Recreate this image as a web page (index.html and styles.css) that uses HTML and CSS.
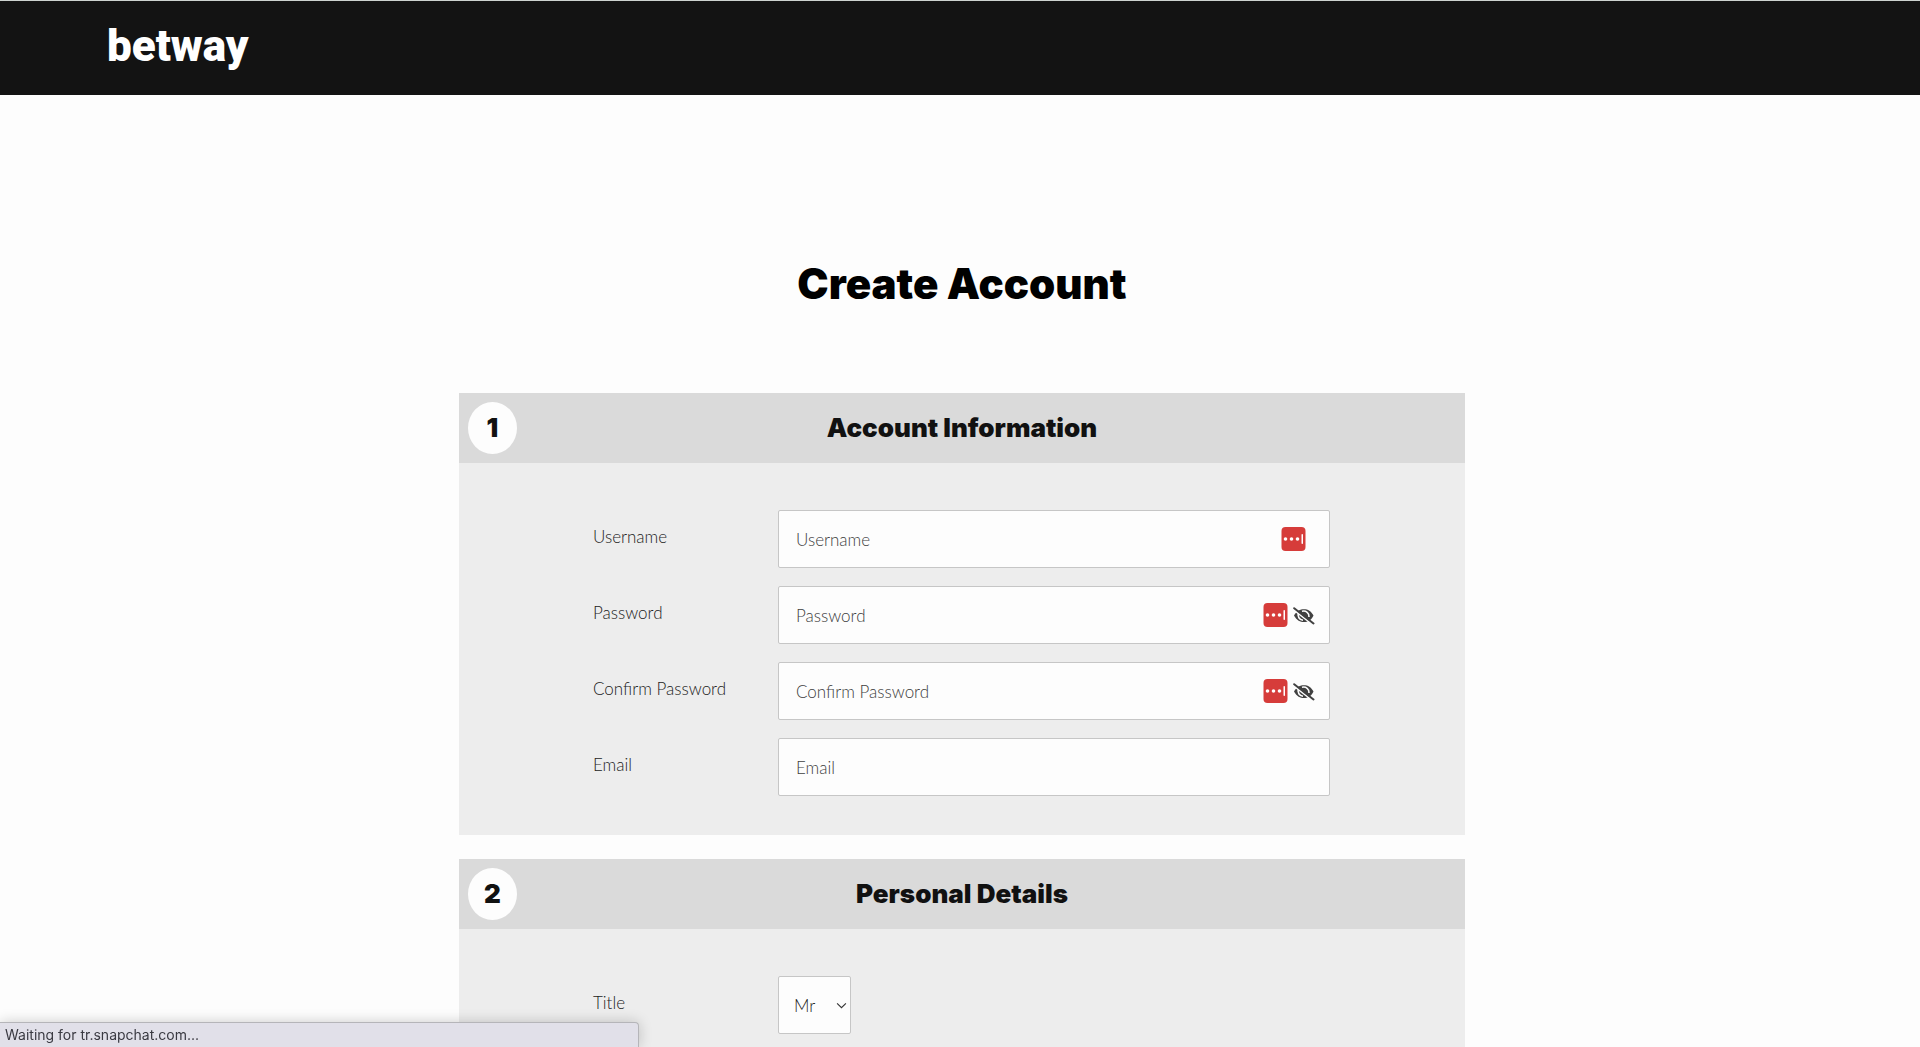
FILE: index.html
```
<!DOCTYPE html>
<html lang="en">
<head>
  <meta charset="UTF-8" />
  <meta name="viewport" content="width=device-width, initial-scale=1.0"/>
  <title>Create Account</title>

  <link rel="stylesheet" href="styles.css">
</head>

<body>
  <!-- shared icons -->
  <svg class="sprite" aria-hidden="true">
    <symbol id="icon-vault" viewBox="0 0 24 24">
      <rect width="24" height="24" rx="4" fill="#d63c3a"/>
      <circle cx="4" cy="12" r="1.800" fill="#fff"/>
      <circle cx="10" cy="12" r="1.800" fill="#fff"/>
      <circle cx="16" cy="12" r="1.800" fill="#fff"/>
      <rect x="20" y="7" width="1.500" height="10" rx="0.700" fill="#fff"/>
    </symbol>
    <symbol id="icon-hidden" viewBox="0 0 22 18">
      <path d="M1 8.500C4 3.500 7 2.200 11 2.200S18 4 20.500 8.500C18 13.500 15 15 11 15S4 13.500 1 8.500Z" fill="#414141"/>
      <path d="M5.500 5.500C4 9.500 6.500 13 10 13.200M9 4.300C13 3.300 16.500 6 16 10" fill="none" stroke="#fdfdfd" stroke-width="1.600"/>
      <path d="M1 3L20 18" stroke="#fdfdfd" stroke-width="1.600"/>
      <path d="M1.200 1.200L20.500 16.500" stroke="#414141" stroke-width="2" stroke-linecap="round"/>
    </symbol>
  </svg>

  <header class="topbar">
    <a class="logo" href="#">betway</a>
  </header>

  <main class="content">
    <h1>Create Account</h1>

    <form class="register">
      <section class="panel">
        <div class="panel-head">
          <span class="step">1</span>
          <h2>Account Information</h2>
        </div>
        <div class="fields">
          <div class="row">
            <label for="username">Username</label>
            <div class="control">
              <input type="text" id="username" placeholder="Username">
              <div class="tools tools-single">
                <svg class="vault"><use href="#icon-vault"/></svg>
              </div>
            </div>
          </div>
          <div class="row">
            <label for="password">Password</label>
            <div class="control">
              <input type="password" id="password" placeholder="Password">
              <div class="tools">
                <svg class="vault"><use href="#icon-vault"/></svg>
                <button type="button" aria-label="Show password"><svg class="eye"><use href="#icon-hidden"/></svg></button>
              </div>
            </div>
          </div>
          <div class="row">
            <label for="confirm">Confirm Password</label>
            <div class="control">
              <input type="password" id="confirm" placeholder="Confirm Password">
              <div class="tools">
                <svg class="vault"><use href="#icon-vault"/></svg>
                <button type="button" aria-label="Show password"><svg class="eye"><use href="#icon-hidden"/></svg></button>
              </div>
            </div>
          </div>
          <div class="row">
            <label for="email">Email</label>
            <div class="control">
              <input type="email" id="email" placeholder="Email">
            </div>
          </div>
        </div>
      </section>

      <section class="panel">
        <div class="panel-head">
          <span class="step">2</span>
          <h2>Personal Details</h2>
        </div>
        <div class="fields">
          <div class="row">
            <label for="title">Title</label>
            <div class="control control-select">
              <select id="title">
                <option>Mr</option>
                <option>Mrs</option>
                <option>Miss</option>
                <option>Ms</option>
              </select>
              <svg class="chevron" viewBox="0 0 10 6"><path d="M1 1L5 5L9 1" fill="none" stroke="#333" stroke-width="1"/></svg>
            </div>
          </div>
        </div>
      </section>
    </form>
  </main>

  <div class="status">Waiting for tr.snapchat.com...</div>
</body>
</html>
```
FILE: styles.css
```
* {
  box-sizing: border-box;
}

body {
  margin: 0;
  background: #fdfdfd;
  color: #1c1c1c;
  font-family: Lato, "Liberation Sans", sans-serif;
  font-size: 17px;
  font-weight: 300;
}

/* no visible scrollbar, the page still scrolls */
html {
  scrollbar-width: none;
}

.sprite {
  display: none;
}

.topbar {
  display: flex;
  align-items: center;
  height: 95px;
  padding: 0 107px 4px;
  background: #131313;
  border-top: 1px solid #cdd3d0;
}

.logo {
  color: #fff;
  font-family: Roboto, sans-serif;
  font-size: 44px;
  font-weight: 900;
  line-height: 52px;
  text-decoration: none;
}

.content {
  padding-left: 4px;
}

h1,
h2 {
  margin: 0;
  font-family: Inter, sans-serif;
  font-weight: 900;
  text-align: center;
}

h1 {
  padding: 163px 0 84px;
  color: #000;
  font-size: 42px;
  line-height: 51px;
}

.register {
  max-width: 1006px;
  margin: 0 auto;
}

.panel {
  margin-bottom: 24px;
  background: #ededed;
}

.panel-head {
  position: relative;
  display: flex;
  align-items: center;
  justify-content: center;
  height: 70px;
  background: #dadada;
  color: #111;
}

h2 {
  font-size: 26px;
  line-height: 32px;
}

.step {
  position: absolute;
  left: 9px;
  width: 49px;
  height: 52px;
  border-radius: 50%;
  background: #fdfdfd;
  font-family: Inter, sans-serif;
  font-size: 26px;
  font-weight: 900;
  line-height: 52px;
  text-align: center;
}

.fields {
  display: grid;
  gap: 18px;
  padding: 47px 135px 39px 134px;
}

.row {
  display: grid;
  grid-template-columns: 185px 1fr;
  align-items: center;
}

.row label {
  padding-bottom: 6px;
}

.control {
  position: relative;
}

.control input,
.control select {
  display: block;
  width: 100%;
  height: 58px;
  padding: 0 17px;
  border: 1px solid #c6c6c6;
  border-radius: 2px;
  background: #fdfdfd;
  color: #1c1c1c;
  font: inherit;
}

.control input::placeholder {
  color: #404040;
  opacity: 1;
}

.control select {
  padding: 0 15px;
  appearance: none;
}

.control-select {
  width: 73px;
}

.chevron {
  position: absolute;
  top: 26px;
  right: 4px;
  width: 11px;
  height: 7px;
  pointer-events: none;
}

/* icons sitting on top of the inputs */
.tools {
  position: absolute;
  top: 0;
  right: 15px;
  display: flex;
  align-items: center;
  gap: 5px;
  height: 58px;
}

.tools-single {
  right: 24px;
}

.tools button {
  padding: 2px 0 0;
  border: 0;
  background: none;
  cursor: pointer;
}

.vault,
.eye {
  display: block;
}

.vault {
  width: 25px;
  height: 24px;
}

.eye {
  width: 22px;
  height: 18px;
}

.status {
  position: fixed;
  bottom: 0;
  left: 0;
  width: 639px;
  max-width: 100%;
  height: 25px;
  padding-left: 5px;
  border: 1px solid #b5b5b9;
  border-width: 1px 1px 0 0;
  border-radius: 0 4px 0 0;
  background: #e1e0e9;
  box-shadow: 0 0 14px rgba(0, 0, 0, 0.2);
  color: #3a3a42;
  font: 400 14px/24px Inter, sans-serif;
}
```
